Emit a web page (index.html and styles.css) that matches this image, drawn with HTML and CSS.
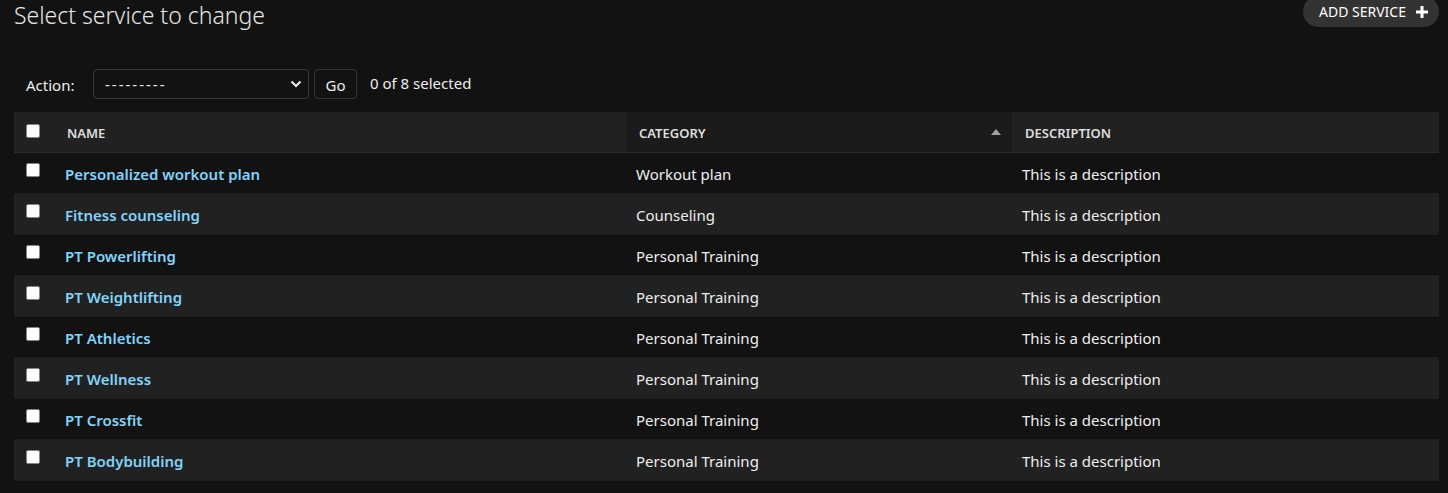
FILE: index.html
```html
<!DOCTYPE html>
<html lang="en">
<head>
<meta charset="utf-8">
<title>Select service to change</title>
<link rel="stylesheet" href="styles.css">
</head>
<body>
<div class="page">
  <div class="top">
    <h1 class="title">Select service to change</h1>
    <a class="add-btn" href="#">ADD SERVICE
      <svg class="plus" width="12" height="12" viewBox="0 0 12 12"><path d="M4.5 0h3v4.5H12v3H7.5V12h-3V7.5H0v-3h4.5z" fill="#fff"/></svg>
    </a>
  </div>
  <div class="actions">
    <label class="action-label">Action:</label>
    <div class="select">
      <span class="dashes">---------</span>
      <svg class="chev" width="12" height="8" viewBox="0 0 12 8"><path d="M1.5 1.5 6 6l4.5-4.5" fill="none" stroke="#eee" stroke-width="2"/></svg>
    </div>
    <button class="go">Go</button>
    <span class="counter">0 of 8 selected</span>
  </div>
  <table class="results">
    <colgroup>
      <col class="c-check"><col class="c-name"><col class="c-cat"><col class="c-desc">
    </colgroup>
    <thead>
      <tr>
        <th class="th-check"><span class="cb"></span></th>
        <th><div class="th-text">NAME</div></th>
        <th class="sorted"><div class="th-text">CATEGORY<span class="arrow"></span></div></th>
        <th><div class="th-text">DESCRIPTION</div></th>
      </tr>
    </thead>
    <tbody>
      <tr><td class="td-check"><span class="cb"></span></td><th class="name"><a href="#">Personalized workout plan</a></th><td>Workout plan</td><td>This is a description</td></tr>
      <tr class="alt"><td class="td-check"><span class="cb"></span></td><th class="name"><a href="#">Fitness counseling</a></th><td>Counseling</td><td>This is a description</td></tr>
      <tr><td class="td-check"><span class="cb"></span></td><th class="name"><a href="#">PT Powerlifting</a></th><td>Personal Training</td><td>This is a description</td></tr>
      <tr class="alt"><td class="td-check"><span class="cb"></span></td><th class="name"><a href="#">PT Weightlifting</a></th><td>Personal Training</td><td>This is a description</td></tr>
      <tr><td class="td-check"><span class="cb"></span></td><th class="name"><a href="#">PT Athletics</a></th><td>Personal Training</td><td>This is a description</td></tr>
      <tr class="alt"><td class="td-check"><span class="cb"></span></td><th class="name"><a href="#">PT Wellness</a></th><td>Personal Training</td><td>This is a description</td></tr>
      <tr><td class="td-check"><span class="cb"></span></td><th class="name"><a href="#">PT Crossfit</a></th><td>Personal Training</td><td>This is a description</td></tr>
      <tr class="alt"><td class="td-check"><span class="cb"></span></td><th class="name"><a href="#">PT Bodybuilding</a></th><td>Personal Training</td><td>This is a description</td></tr>
    </tbody>
  </table>
</div>
</body>
</html>
```
FILE: styles.css
```css
html, body {
  margin: 0;
  background: #121212;
  color: #eeeeee;
  font-family: "Noto Sans", "Open Sans", sans-serif;
  font-size: 15px;
}
.page {
  padding: 0 9px 0 14px;
}
.top {
  display: flex;
  justify-content: space-between;
  align-items: flex-start;
  height: 28px;
}
.title {
  margin: 0;
  font-size: 23px;
  font-weight: 300;
  line-height: 30px;
  color: #e6e6e6;
}
.add-btn {
  display: flex;
  align-items: center;
  gap: 10px;
  height: 31px;
  margin-top: -4px;
  padding: 0 11px 0 16px;
  border-radius: 16px;
  background: #333333;
  color: #ffffff;
  text-decoration: none;
  font-size: 14px;
  font-weight: 400;
}
.actions {
  display: flex;
  align-items: center;
  height: 30px;
  margin-top: 41px;
  padding-left: 12px;
}
.action-label {
  width: 67px;
  font-size: 15px;
  padding-top: 1px;
}
.select {
  display: flex;
  align-items: center;
  justify-content: space-between;
  box-sizing: border-box;
  width: 216px;
  height: 30px;
  padding: 0 6px 0 11px;
  border: 1px solid #3a3a3a;
  border-radius: 4px;
  font-size: 15px;
}
.dashes {
  letter-spacing: 2px;
}
.go {
  box-sizing: border-box;
  width: 43px;
  height: 30px;
  margin-left: 5px;
  padding: 2px 0 0 0;
  background: #121212;
  color: #eeeeee;
  border: 1px solid #333333;
  border-radius: 4px;
  font-family: inherit;
  font-size: 15px;
}
.counter {
  margin-left: 13px;
  margin-top: -2px;
  font-size: 15px;
}
.results {
  width: 100%;
  margin-top: 13px;
  border-collapse: collapse;
  table-layout: fixed;
}
.c-check { width: 40px; }
.c-name { width: 572px; }
.c-cat { width: 386px; }
thead th {
  background: #212121;
  height: 40px;
  padding: 0;
  text-align: left;
  font-size: 13px;
  font-weight: 600;
  color: #dedede;
  border-bottom: 1px solid #2b2b2b;
}
thead th.sorted {
  background: #1b1b1b;
}
.th-text {
  position: relative;
  padding: 1px 13px 0;
}
.arrow {
  position: absolute;
  right: 11px;
  top: 6px;
  width: 0;
  height: 0;
  border-left: 5px solid transparent;
  border-right: 5px solid transparent;
  border-bottom: 6px solid #a0a0a0;
}
.th-check, .td-check {
  padding: 0 0 0 12px;
  text-align: left;
}
.cb {
  display: block;
  box-sizing: border-box;
  width: 14px;
  height: 14px;
  background: #ffffff;
  border: 1px solid #858585;
  border-radius: 2px;
}
.th-check .cb { margin-top: -2px; }
.td-check .cb { margin-top: -6px; }
tbody tr {
  height: 41px;
  border-bottom: 1px solid #1e1e1e;
}
tbody tr.alt {
  background: #212121;
}
tbody td, tbody th {
  padding: 1px 10px 0;
  text-align: left;
  font-size: 15px;
  font-weight: 400;
  vertical-align: middle;
}
tbody th.name {
  padding-left: 11px;
}
tbody th.name a {
  color: #81d4fa;
  font-weight: 600;
  text-decoration: none;
}
```
